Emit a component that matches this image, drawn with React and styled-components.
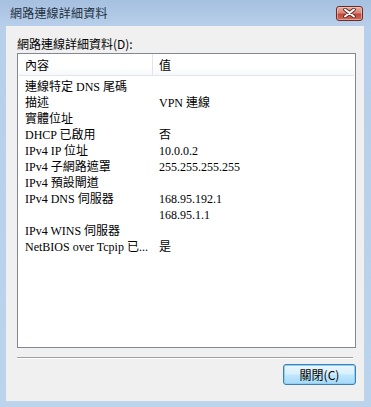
import React from "react";
import styled, { createGlobalStyle } from "styled-components";

const GlobalStyle = createGlobalStyle`
  html, body {
    margin: 0;
    padding: 0;
    background: #b9d1ea;
  }
  * { box-sizing: border-box; }
`;

const Window = styled.div`
  width: 371px;
  height: 407px;
  display: flex;
  flex-direction: column;
  background: linear-gradient(to bottom, #a6c0e0 0px, #b7cfea 26px, #bcd3ec 100%);
  padding: 0 7px 6px 6px;
`;

const TitleBar = styled.div`
  height: 26px;
  display: flex;
  align-items: center;
  justify-content: space-between;
  padding: 0 1px 2px 4px;
`;

const Title = styled.div`
  font-family: "Noto Sans CJK TC", sans-serif;
  font-size: 12px;
  color: #1e2f40;
  letter-spacing: 0.2px;
`;

const CloseButton = styled.div`
  width: 27px;
  height: 15px;
  margin-top: 2px;
  border: 1px solid #6a2b26;
  border-radius: 3px;
  background: linear-gradient(to bottom, #e7aa9c 0%, #d88876 45%, #c4463a 55%, #cf6a56 100%);
  display: flex;
  align-items: center;
  justify-content: center;
  box-shadow: inset 0 0 0 1px rgba(255, 220, 210, 0.5);
`;

const Client = styled.div`
  flex: 1;
  background: #f0f0f0;
  display: flex;
  flex-direction: column;
  padding: 11px 8px 16px 11px;
`;

const Label = styled.div`
  font-family: "Noto Sans CJK TC", sans-serif;
  font-size: 12px;
  line-height: 14px;
  color: #000;
  height: 16px;
`;

const ListView = styled.div`
  flex: 1;
  background: #fff;
  border: 1px solid #828790;
  display: flex;
  flex-direction: column;
  padding: 0 1px;
`;

const Header = styled.div`
  display: grid;
  grid-template-columns: 134px 1fr;
  height: 22px;
  background: linear-gradient(to bottom, #ffffff 0%, #ffffff 60%, #f7f8fa 100%);
  border-bottom: 1px solid #e3e6ea;
`;

const HeaderCell = styled.div`
  font-family: "Liberation Serif", "Noto Sans CJK TC", serif;
  font-size: 12px;
  color: #000;
  display: flex;
  align-items: center;
  padding-left: ${({ $pad }) => $pad}px;
  border-right: ${({ $sep }) => ($sep ? "1px solid #e1e4e8" : "none")};
`;

const Rows = styled.div`
  display: grid;
  grid-template-columns: 134px 1fr;
  grid-auto-rows: 16px;
  padding-top: 3px;
`;

const Cell = styled.div`
  font-family: "Liberation Serif", "Noto Sans CJK TC", serif;
  font-size: 12px;
  line-height: 16px;
  color: #000;
  white-space: nowrap;
  overflow: hidden;
  padding-left: ${({ $pad }) => $pad}px;
`;

const Separator = styled.div`
  height: 2px;
  margin: 9px 3px 5px 0;
  border-top: 1px solid #a0a0a0;
  border-bottom: 1px solid #ffffff;
`;

const Footer = styled.div`
  display: flex;
  justify-content: flex-end;
`;

const Button = styled.div`
  width: 73px;
  height: 21px;
  border: 1px solid #3c7fb1;
  border-radius: 3px;
  background: linear-gradient(to bottom, #eaf6fd 0%, #d9f0fc 45%, #bee6fd 55%, #a7d9f5 100%);
  box-shadow: inset 0 0 0 1px #8fd0f5;
  display: flex;
  align-items: center;
  justify-content: center;
  font-family: "Noto Sans CJK TC", sans-serif;
  font-size: 12px;
  color: #000;
`;

const rows = [
  ["連線特定 DNS 尾碼", ""],
  ["描述", "VPN 連線"],
  ["實體位址", ""],
  ["DHCP 已啟用", "否"],
  ["IPv4 IP 位址", "10.0.0.2"],
  ["IPv4 子網路遮罩", "255.255.255.255"],
  ["IPv4 預設閘道", ""],
  ["IPv4 DNS 伺服器", "168.95.192.1"],
  ["", "168.95.1.1"],
  ["IPv4 WINS 伺服器", ""],
  ["NetBIOS over Tcpip 已...", "是"],
];

const CloseIcon = () => (
  <svg width="13" height="10" viewBox="0 0 13 10">
    <path
      d="M2 1.5 L11 8.5 M11 1.5 L2 8.5"
      stroke="#5a2420"
      strokeWidth="3.6"
      strokeLinecap="round"
    />
    <path
      d="M2 1.5 L11 8.5 M11 1.5 L2 8.5"
      stroke="#ffffff"
      strokeWidth="2"
      strokeLinecap="round"
    />
  </svg>
);

export default function App() {
  return (
    <>
      <GlobalStyle />
      <Window>
        <TitleBar>
          <Title>網路連線詳細資料</Title>
          <CloseButton>
            <CloseIcon />
          </CloseButton>
        </TitleBar>
        <Client>
          <Label>網路連線詳細資料(D):</Label>
          <ListView>
            <Header>
              <HeaderCell $pad={6} $sep>內容</HeaderCell>
              <HeaderCell $pad={6}>值</HeaderCell>
            </Header>
            <Rows>
              {rows.map(([k, v], i) => (
                <React.Fragment key={i}>
                  <Cell $pad={6}>{k}</Cell>
                  <Cell $pad={6}>{v}</Cell>
                </React.Fragment>
              ))}
            </Rows>
          </ListView>
          <Separator />
          <Footer>
            <Button>關閉(C)</Button>
          </Footer>
        </Client>
      </Window>
    </>
  );
}
